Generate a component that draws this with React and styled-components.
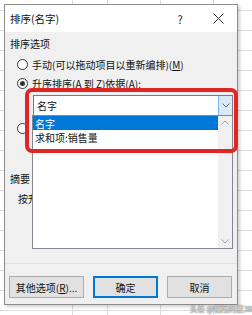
import styled, { createGlobalStyle } from "styled-components";

const GlobalStyle = createGlobalStyle`
	html, body {
		margin: 0;
		padding: 0;
	}
	body {
		width: 252px;
		height: 315px;
		overflow: hidden;
		font-family: "Noto Sans CJK SC", "Liberation Sans", sans-serif;
		background-color: #ffffff;
		background-image:
			linear-gradient(to right, transparent 72px, #dcdcdc 72px, #dcdcdc 73px, transparent 73px),
			linear-gradient(to right, transparent 107px, #dcdcdc 107px, #dcdcdc 108px, transparent 108px),
			linear-gradient(to right, transparent 160px, #dcdcdc 160px, #dcdcdc 161px, transparent 161px),
			linear-gradient(to right, transparent 213px, #dcdcdc 213px, #dcdcdc 214px, transparent 214px),
			repeating-linear-gradient(to bottom, transparent 0, transparent 10px, #dcdcdc 10px, #dcdcdc 11px, transparent 11px, transparent 20px);
	}
`;

const Sheet = styled.div`
	position: relative;
	width: 252px;
	height: 315px;
	padding: 4px 0 0 4px;
	box-sizing: border-box;
`;

const Dialog = styled.div`
	position: relative;
	width: 234px;
	height: 301px;
	box-sizing: border-box;
	border: 1px solid #8c8c8c;
	box-shadow: 2px 2px 3px rgba(0, 0, 0, 0.18);
	background: #f0f0f0;
	display: flex;
	flex-direction: column;
	font-size: 10px;
	color: #111;
`;

const TitleBar = styled.div`
	height: 27px;
	background: #fff;
	display: flex;
	align-items: center;
	padding-left: 5px;
	font-size: 10.5px;
`;

const Title = styled.span`
	flex: 1;
`;

const TitleButton = styled.span`
	width: 38px;
	display: flex;
	justify-content: center;
	align-items: center;
	font-size: 11px;
	color: #222;
`;

const Body = styled.div`
	flex: 1;
	display: flex;
	flex-direction: column;
	padding-left: 5px;
`;

const SectionLabel = styled.div`
	height: 20px;
	display: flex;
	align-items: center;
	margin-top: ${(p) => p.$top || 0}px;
`;

const RadioRow = styled.label`
	height: 19px;
	display: flex;
	align-items: center;
	gap: 4px;
	padding-left: 7px;
	margin-top: ${(p) => p.$top || 0}px;
`;

const RadioDot = styled.span`
	width: 11px;
	height: 11px;
	box-sizing: border-box;
	border: 1px solid #333;
	border-radius: 50%;
	background: #fff;
	display: flex;
	justify-content: center;
	align-items: center;

	&::after {
		content: "";
		width: 5px;
		height: 5px;
		border-radius: 50%;
		background: ${(p) => (p.$checked ? "#333" : "transparent")};
	}
`;

const U = styled.span`
	text-decoration: underline;
`;

const Combo = styled.div`
	width: 200px;
	height: 21px;
	box-sizing: border-box;
	margin: ${(p) => p.$top || 0}px 0 0 23px;
	border: 1px solid #7a7a7a;
	background: #fff;
	display: flex;
	align-items: stretch;
`;

const ComboText = styled.span`
	flex: 1;
	display: flex;
	align-items: center;
	padding-left: 3px;
`;

const ComboButton = styled.span`
	width: 13px;
	background: #d9e9f7;
	border-left: 1px solid #7eb4ea;
	display: flex;
	justify-content: center;
	align-items: center;
`;

const SummaryText = styled.div`
	height: 20px;
	width: 15px;
	overflow: hidden;
	white-space: nowrap;
	display: flex;
	align-items: center;
	margin-left: 8px;
`;

const Footer = styled.div`
	border-top: 1px solid #e2e2e2;
	padding: 12px 4px 6px 4px;
	display: flex;
	gap: 9px;
`;

const Button = styled.button`
	height: 22px;
	width: ${(p) => p.$width}px;
	box-sizing: border-box;
	background: #e1e1e1;
	border: ${(p) => (p.$default ? "2px solid #0078d7" : "1px solid #adadad")};
	font-family: inherit;
	font-size: 10px;
	color: #111;
	padding: 0;
`;

const DropList = styled.div`
	position: absolute;
	left: 27px;
	top: 110px;
	width: 201px;
	height: 134px;
	box-sizing: border-box;
	border: 1px solid #828790;
	background: #fff;
	display: flex;
`;

const Items = styled.div`
	flex: 1;
	display: flex;
	flex-direction: column;
`;

const Item = styled.div`
	height: 14px;
	display: flex;
	align-items: center;
	padding-left: 2px;
	background: ${(p) => (p.$selected ? "#0078d7" : "transparent")};
	color: ${(p) => (p.$selected ? "#fff" : "#111")};
`;

const ScrollBar = styled.div`
	width: 14px;
	background: #f0f0f0;
	display: flex;
	flex-direction: column;
	justify-content: space-between;
	align-items: center;
	padding: 4px 0;
`;

const Highlight = styled.div`
	position: absolute;
	left: 20px;
	top: 83px;
	width: 213px;
	height: 65px;
	box-sizing: border-box;
	border: 4px solid #e02525;
	border-radius: 7px;
	pointer-events: none;
`;

const Watermark = styled.div`
	position: absolute;
	left: 190px;
	top: 303px;
	font-size: 7.5px;
	color: rgba(255, 255, 255, 0.9);
	text-shadow: 0 0 1px #555, 0 0 1px #555;
	white-space: nowrap;
`;

function Chevron({ up, color = "#8a8a8a" }) {
	return (
		<svg width="8" height="5" viewBox="0 0 8 5">
			<path
				d={up ? "M0.5 4.5 L4 1 L7.5 4.5" : "M0.5 0.5 L4 4 L7.5 0.5"}
				fill="none"
				stroke={color}
				strokeWidth="1"
			/>
		</svg>
	);
}

function CloseIcon() {
	return (
		<svg width="11" height="11" viewBox="0 0 11 11">
			<path d="M0.5 0.5 L10.5 10.5 M10.5 0.5 L0.5 10.5" stroke="#333" strokeWidth="1" />
		</svg>
	);
}

export default function App() {
	return (
		<>
			<GlobalStyle />
			<Sheet>
				<Dialog>
					<TitleBar>
						<Title>排序(名字)</Title>
						<TitleButton>?</TitleButton>
						<TitleButton>
							<CloseIcon />
						</TitleButton>
					</TitleBar>
					<Body>
						<SectionLabel $top={1}>排序选项</SectionLabel>
						<RadioRow $top={2}>
							<RadioDot />
							<span>
								手动(可以拖动项目以重新编排)(<U>M</U>)
							</span>
						</RadioRow>
						<RadioRow>
							<RadioDot $checked />
							<span>
								升序排序(A 到 Z)依据(<U>A</U>):
							</span>
						</RadioRow>
						<Combo $top={2}>
							<ComboText>名字</ComboText>
							<ComboButton>
								<Chevron color="#4a6c8c" />
							</ComboButton>
						</Combo>
						<RadioRow $top={3}>
							<RadioDot />
						</RadioRow>
						<Combo $top={2} />
						<SectionLabel $top={7}>摘要</SectionLabel>
						<SummaryText>按升序排序</SummaryText>
					</Body>
					<Footer>
						<Button $width={75}>
							其他选项(<U>R</U>)...
						</Button>
						<Button $width={65} $default>
							确定
						</Button>
						<Button $width={65}>取消</Button>
					</Footer>

					<DropList>
						<Items>
							<Item $selected>名字</Item>
							<Item>求和项:销售量</Item>
						</Items>
						<ScrollBar>
							<Chevron up color="#a0a0a0" />
							<Chevron color="#a0a0a0" />
						</ScrollBar>
					</DropList>
					<Highlight />
				</Dialog>
				<Watermark>头条 @保险的星38</Watermark>
			</Sheet>
		</>
	);
}
